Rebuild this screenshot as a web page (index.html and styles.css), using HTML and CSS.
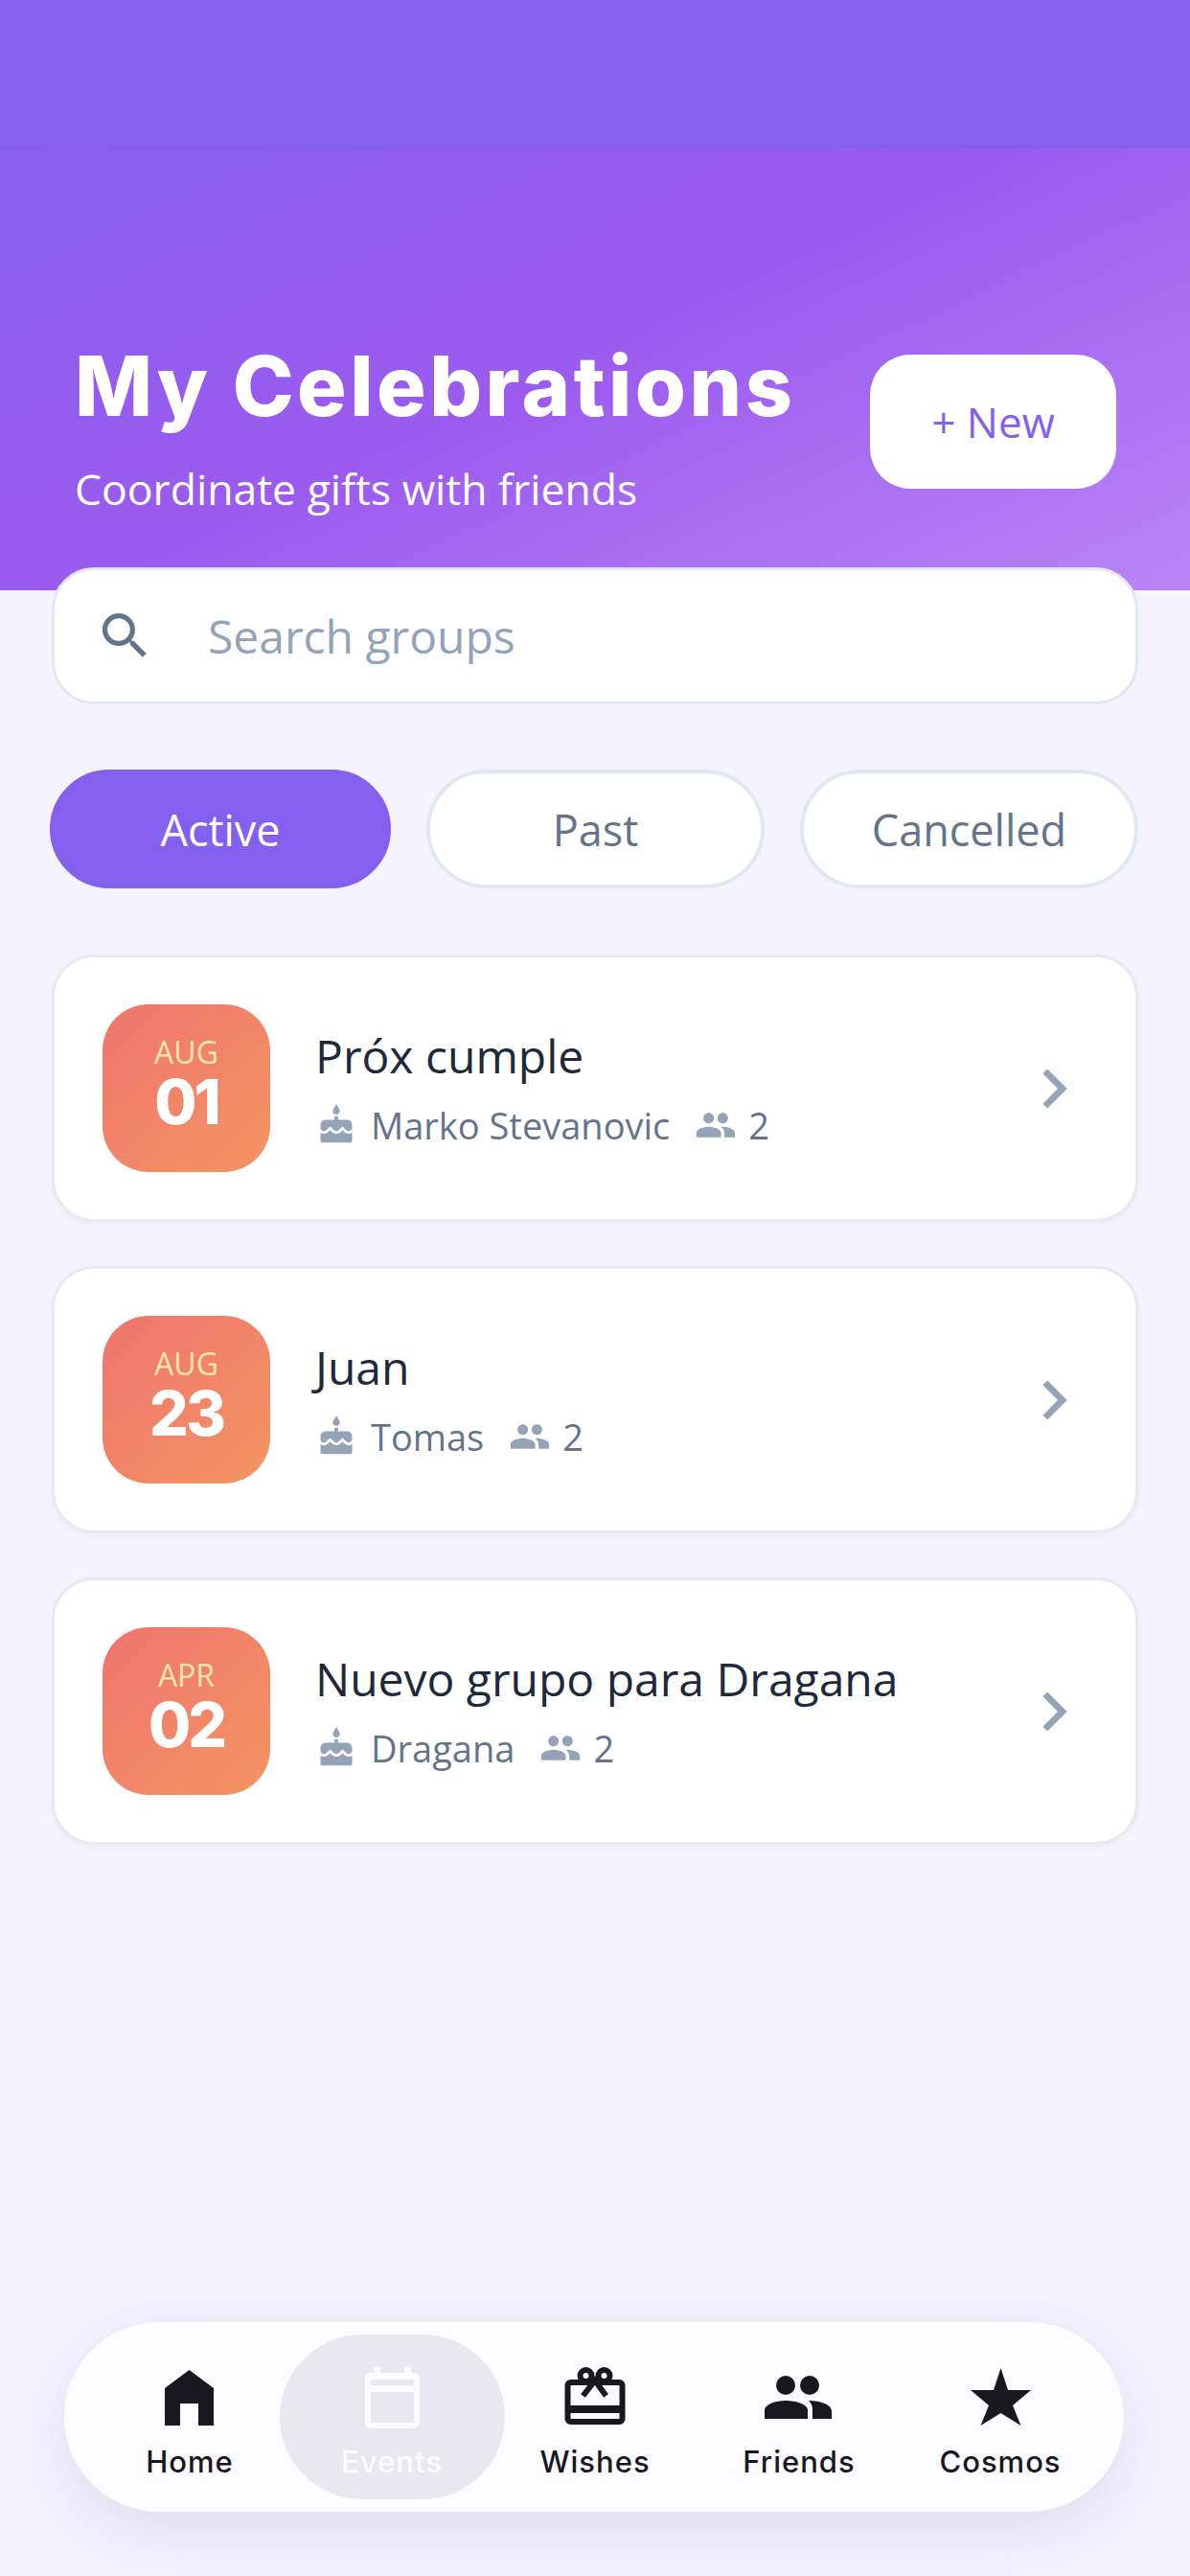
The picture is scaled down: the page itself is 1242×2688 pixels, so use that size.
FILE: index.html
```html
<!DOCTYPE html>
<html lang="en">
<head>
    <meta charset="UTF-8">
    <title>My Celebrations</title>
    <link rel="stylesheet" href="styles.css">
</head>
<body>
    <div class="page">
        <header class="hero">
            <div class="status-band"></div>
            <div class="hero-row">
                <div class="hero-text">
                    <h1>My Celebrations</h1>
                    <p>Coordinate gifts with friends</p>
                </div>
                <button class="new-btn">+ New</button>
            </div>
        </header>

        <div class="search">
            <svg class="search-icon" viewBox="0 0 24 24"><path d="M15.5 14h-.79l-.28-.27C15.41 12.59 16 11.11 16 9.5 16 5.91 13.09 3 9.5 3S3 5.91 3 9.5 5.91 16 9.5 16c1.61 0 3.09-.59 4.23-1.57l.27.28v.79l5 4.99L20.49 19l-4.99-5zm-6 0C7.01 14 5 11.99 5 9.5S7.01 5 9.5 5 14 7.01 14 9.5 11.99 14 9.5 14z"/></svg>
            <span>Search groups</span>
        </div>

        <div class="tabs">
            <div class="tab active">Active</div>
            <div class="tab">Past</div>
            <div class="tab">Cancelled</div>
        </div>

        <div class="cards">
            <div class="card">
                <div class="date"><span class="month">AUG</span><span class="day">01</span></div>
                <div class="info">
                    <div class="name">Próx cumple</div>
                    <div class="meta">
                        <svg class="cake" viewBox="0 0 24 24"><path d="M12 6c1.11 0 2-.9 2-2 0-.38-.1-.73-.29-1.03L12 0l-1.71 2.97c-.19.3-.29.65-.29 1.03 0 1.1.9 2 2 2zm4.6 9.99l-1.07-1.07-1.08 1.07c-1.3 1.3-3.58 1.31-4.89 0l-1.07-1.07-1.09 1.07C6.75 16.64 5.88 17 4.96 17c-.73 0-1.4-.23-1.96-.61V21c0 .55.45 1 1 1h16c.55 0 1-.45 1-1v-4.61c-.56.38-1.23.61-1.96.61-.92 0-1.79-.36-2.44-1.01zM18 9h-5V7h-2v2H6c-1.66 0-3 1.34-3 3v1.54c0 1.08.88 1.96 1.96 1.96.52 0 1.02-.2 1.38-.57l2.14-2.13 2.13 2.13c.74.74 2.03.74 2.77 0l2.14-2.13 2.13 2.13c.37.37.86.57 1.38.57 1.08 0 1.96-.88 1.96-1.96V12C21 10.34 19.66 9 18 9z"/></svg>
                        <span>Marko Stevanovic</span>
                        <svg class="people" viewBox="0 0 24 24"><path d="M16 11c1.66 0 2.99-1.34 2.99-3S17.66 5 16 5c-1.66 0-3 1.34-3 3s1.34 3 3 3zm-8 0c1.66 0 2.99-1.34 2.99-3S9.66 5 8 5C6.34 5 5 6.34 5 8s1.34 3 3 3zm0 2c-2.33 0-7 1.17-7 3.5V19h14v-2.5c0-2.33-4.67-3.5-7-3.5zm8 0c-.29 0-.62.02-.97.05 1.16.84 1.97 1.97 1.97 3.45V19h6v-2.5c0-2.33-4.67-3.5-7-3.5z"/></svg>
                        <span>2</span>
                    </div>
                </div>
                <svg class="chevron" viewBox="0 0 24 24"><path d="M10 6L8.59 7.41 13.17 12l-4.58 4.59L10 18l6-6z"/></svg>
            </div>

            <div class="card">
                <div class="date"><span class="month">AUG</span><span class="day">23</span></div>
                <div class="info">
                    <div class="name">Juan</div>
                    <div class="meta">
                        <svg class="cake" viewBox="0 0 24 24"><path d="M12 6c1.11 0 2-.9 2-2 0-.38-.1-.73-.29-1.03L12 0l-1.71 2.97c-.19.3-.29.65-.29 1.03 0 1.1.9 2 2 2zm4.6 9.99l-1.07-1.07-1.08 1.07c-1.3 1.3-3.58 1.31-4.89 0l-1.07-1.07-1.09 1.07C6.75 16.64 5.88 17 4.96 17c-.73 0-1.4-.23-1.96-.61V21c0 .55.45 1 1 1h16c.55 0 1-.45 1-1v-4.61c-.56.38-1.23.61-1.96.61-.92 0-1.79-.36-2.44-1.01zM18 9h-5V7h-2v2H6c-1.66 0-3 1.34-3 3v1.54c0 1.08.88 1.96 1.96 1.96.52 0 1.02-.2 1.38-.57l2.14-2.13 2.13 2.13c.74.74 2.03.74 2.77 0l2.14-2.13 2.13 2.13c.37.37.86.57 1.38.57 1.08 0 1.96-.88 1.96-1.96V12C21 10.34 19.66 9 18 9z"/></svg>
                        <span>Tomas</span>
                        <svg class="people" viewBox="0 0 24 24"><path d="M16 11c1.66 0 2.99-1.34 2.99-3S17.66 5 16 5c-1.66 0-3 1.34-3 3s1.34 3 3 3zm-8 0c1.66 0 2.99-1.34 2.99-3S9.66 5 8 5C6.34 5 5 6.34 5 8s1.34 3 3 3zm0 2c-2.33 0-7 1.17-7 3.5V19h14v-2.5c0-2.33-4.67-3.5-7-3.5zm8 0c-.29 0-.62.02-.97.05 1.16.84 1.97 1.97 1.97 3.45V19h6v-2.5c0-2.33-4.67-3.5-7-3.5z"/></svg>
                        <span>2</span>
                    </div>
                </div>
                <svg class="chevron" viewBox="0 0 24 24"><path d="M10 6L8.59 7.41 13.17 12l-4.58 4.59L10 18l6-6z"/></svg>
            </div>

            <div class="card">
                <div class="date"><span class="month">APR</span><span class="day">02</span></div>
                <div class="info">
                    <div class="name">Nuevo grupo para Dragana</div>
                    <div class="meta">
                        <svg class="cake" viewBox="0 0 24 24"><path d="M12 6c1.11 0 2-.9 2-2 0-.38-.1-.73-.29-1.03L12 0l-1.71 2.97c-.19.3-.29.65-.29 1.03 0 1.1.9 2 2 2zm4.6 9.99l-1.07-1.07-1.08 1.07c-1.3 1.3-3.58 1.31-4.89 0l-1.07-1.07-1.09 1.07C6.75 16.64 5.88 17 4.96 17c-.73 0-1.4-.23-1.96-.61V21c0 .55.45 1 1 1h16c.55 0 1-.45 1-1v-4.61c-.56.38-1.23.61-1.96.61-.92 0-1.79-.36-2.44-1.01zM18 9h-5V7h-2v2H6c-1.66 0-3 1.34-3 3v1.54c0 1.08.88 1.96 1.96 1.96.52 0 1.02-.2 1.38-.57l2.14-2.13 2.13 2.13c.74.74 2.03.74 2.77 0l2.14-2.13 2.13 2.13c.37.37.86.57 1.38.57 1.08 0 1.96-.88 1.96-1.96V12C21 10.34 19.66 9 18 9z"/></svg>
                        <span>Dragana</span>
                        <svg class="people" viewBox="0 0 24 24"><path d="M16 11c1.66 0 2.99-1.34 2.99-3S17.66 5 16 5c-1.66 0-3 1.34-3 3s1.34 3 3 3zm-8 0c1.66 0 2.99-1.34 2.99-3S9.66 5 8 5C6.34 5 5 6.34 5 8s1.34 3 3 3zm0 2c-2.33 0-7 1.17-7 3.5V19h14v-2.5c0-2.33-4.67-3.5-7-3.5zm8 0c-.29 0-.62.02-.97.05 1.16.84 1.97 1.97 1.97 3.45V19h6v-2.5c0-2.33-4.67-3.5-7-3.5z"/></svg>
                        <span>2</span>
                    </div>
                </div>
                <svg class="chevron" viewBox="0 0 24 24"><path d="M10 6L8.59 7.41 13.17 12l-4.58 4.59L10 18l6-6z"/></svg>
            </div>
        </div>

        <nav class="tabbar">
            <div class="nav-item">
                <svg viewBox="0 0 72 72"><path d="M35.5 7L61 26V65H45V42H26V65H10V26Z"/></svg>
                <span>Home</span>
            </div>
            <div class="nav-item current">
                <svg viewBox="0 0 72 72"><path d="M17 4h7v6h25V4h7v6h3a6 6 0 0 1 6 6v46a6 6 0 0 1-6 6H14a6 6 0 0 1-6-6V16a6 6 0 0 1 6-6h3zM14 17v6h45v-6zM14 30v32h45V30z" fill-rule="evenodd"/></svg>
                <span>Events</span>
            </div>
            <div class="nav-item">
                <svg viewBox="0 0 72 72" class="gift">
                    <rect x="7.500" y="20" width="57" height="41" rx="3"/>
                    <rect class="band" x="7.500" y="44" width="57" height="8"/>
                    <circle cx="26.500" cy="13" r="6"/>
                    <circle cx="45.500" cy="13" r="6"/>
                    <path d="M23.500 34L36 18L47.500 34"/>
                </svg>
                <span>Wishes</span>
            </div>
            <div class="nav-item">
                <svg viewBox="0 0 72 72"><circle cx="22" cy="23" r="10"/><circle cx="47" cy="23" r="10"/><path d="M0 58V49C0 43 11 39 22 39S45 43 45 49V58Z"/><path d="M46 39C58 39 70 43 70 50V58H50V48C50 44 48 41 46 39Z"/></svg>
                <span>Friends</span>
            </div>
            <div class="nav-item">
                <svg viewBox="0 0 72 72"><path d="M36.500 5L44 28H68L49 44L57.500 65L36.500 52L15.500 65L24 44L5 28H29Z"/></svg>
                <span>Cosmos</span>
            </div>
        </nav>
    </div>
</body>
</html>
```

FILE: styles.css
```css
* {
    box-sizing: border-box;
}

body {
    margin: 0;
    background-color: #f5f3ff;
    font-family: "Open Sans", sans-serif;
}

.page {
    display: flex;
    flex-direction: column;
    min-height: 2688px;
}

/* Header */
.hero {
    height: 616px;
    background: linear-gradient(155deg, #8461ee 0%, #9b5bef 55%, #b985f6 100%);
}

.status-band {
    height: 155px;
    background-color: #8560ee;
}

.hero-row {
    display: flex;
    justify-content: space-between;
    align-items: flex-start;
    padding: 215px 77px 0 78px;
}

.hero-text {
    margin-top: -11px;
}

.hero-text h1 {
    margin: 0;
    font-family: "Inter", sans-serif;
    font-size: 86px;
    font-weight: 800;
    line-height: 88px;
    letter-spacing: 3.500px;
    color: #fff;
}

.hero-text p {
    margin: 35px 0 0;
    font-size: 44.500px;
    line-height: 56px;
    color: #fff;
}

.new-btn {
    width: 257px;
    height: 140px;
    border: none;
    border-radius: 42px;
    background-color: #fff;
    color: #8360ee;
    font-family: "Open Sans", sans-serif;
    font-size: 44px;
}

/* Search */
.search {
    display: flex;
    align-items: center;
    height: 143px;
    margin: -24px 54px 0;
    padding-left: 42px;
    background-color: #fff;
    border: 3px solid #e2e8f0;
    border-radius: 44px;
    font-size: 48px;
    color: #94a3b8;
}

.search-icon {
    width: 63px;
    height: 63px;
    margin-right: 55px;
    fill: #64748b;
}

/* Filter tabs */
.tabs {
    display: flex;
    gap: 37px;
    margin: 68px 54px 0 52px;
}

.tab {
    flex: 1;
    display: flex;
    justify-content: center;
    align-items: center;
    height: 124px;
    background-color: #fff;
    border: 4px solid #e2e8f0;
    border-radius: 62px;
    font-size: 45px;
    color: #64748b;
}

.tab.active {
    flex: 0 0 356px;
    background-color: #8360ee;
    border-color: #8360ee;
    color: #fff;
}

/* Group cards */
.cards {
    display: flex;
    flex-direction: column;
    gap: 46px;
    margin: 69px 54px 0;
}

.card {
    display: flex;
    align-items: center;
    height: 279px;
    padding: 0 44px 0 50px;
    background-color: #fff;
    border: 3px solid #e8eaee;
    border-radius: 44px;
    box-shadow: 0 2px 6px rgba(30, 30, 60, 0.04);
}

.date {
    display: flex;
    flex-direction: column;
    align-items: center;
    justify-content: center;
    flex-shrink: 0;
    width: 175px;
    height: 175px;
    padding-bottom: 10px;
    border-radius: 48px;
    background: linear-gradient(135deg, #f0746f 0%, #f39561 100%);
}

.month {
    font-size: 32px;
    line-height: 38px;
    color: #fde7ae;
}

.day {
    font-family: "Inter", sans-serif;
    font-size: 64px;
    font-weight: 800;
    line-height: 66px;
    letter-spacing: -3px;
    color: #fff;
}

.info {
    flex: 1;
    margin-left: 47px;
    padding-bottom: 1px;
}

.name {
    font-size: 48px;
    line-height: 62px;
    color: #1e293b;
}

.meta {
    display: flex;
    align-items: center;
    margin-top: 16px;
    font-size: 38px;
    line-height: 50px;
    color: #64748b;
}

.meta svg {
    fill: #94a3b8;
}

.cake {
    width: 44px;
    height: 44px;
    margin-right: 14px;
}

.people {
    width: 44px;
    height: 44px;
    margin: 0 12px 0 26px;
}

.chevron {
    width: 82px;
    height: 82px;
    fill: #94a3b8;
}

/* Bottom tab bar */
.tabbar {
    display: flex;
    justify-content: center;
    align-items: center;
    height: 198px;
    margin: auto 69px 67px 67px;
    background-color: #fcfbff;
    border-radius: 99px;
    box-shadow: 0 20px 70px rgba(30, 30, 70, 0.1);
}

.nav-item {
    display: flex;
    flex-direction: column;
    align-items: center;
    justify-content: center;
    width: 211px;
    padding-top: 8px;
    font-family: "Inter", sans-serif;
    font-size: 31px;
    font-weight: 500;
    letter-spacing: 1px;
    color: #18181e;
}

.nav-item:nth-child(3) {
    margin: 0 -1px 0 1px;
}

.nav-item:nth-child(4) {
    margin: 0 -3px 0 3px;
}

.nav-item:nth-child(5) {
    margin: 0 -2px 0 2px;
}

.nav-item svg {
    width: 72px;
    height: 72px;
    margin-bottom: 12px;
    fill: currentColor;
}

.nav-item .gift {
    fill: none;
    stroke: currentColor;
    stroke-width: 6;
}

.gift .band {
    fill: currentColor;
    stroke: none;
}

.nav-item.current {
    width: 235px;
    height: 172px;
    margin: 0 -12px;
    background-color: #e9e8f1;
    border-radius: 86px;
    color: #fcfbff;
}
```
